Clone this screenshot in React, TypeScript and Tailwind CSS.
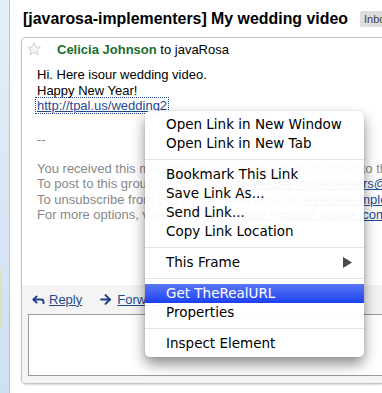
import { Reply, ArrowRight } from "lucide-react";

const menuFont = { fontFamily: '"DejaVu Sans", "Lucida Grande", sans-serif' };

export default function App() {
  return (
    <div className="relative h-[393px] w-[382px] overflow-hidden bg-white font-['Liberation_Sans',Arial,sans-serif]">
      <div className="flex h-full">
        {/* left strip */}
        <div className="relative w-[10px] shrink-0 border-r border-[#b9c5d2] bg-gradient-to-b from-[#e3eef9] to-[#cfe0f1]">
          <div className="absolute left-0 top-[270px] h-[58px] w-[2px] bg-[#d9e4b8]" />
        </div>

        <div className="flex min-w-0 flex-1 flex-col">
          {/* subject */}
          <div className="flex h-[37px] items-center gap-[12px] whitespace-nowrap pl-[13px] pt-[1px]">
            <h1 className="text-[15.9px] font-bold leading-none text-black">
              [javarosa-implementers] My wedding video
            </h1>
            <span className="rounded-l-[2px] bg-[#dddddd] px-[4px] py-[2px] text-[11px] leading-[12px] text-[#444]">
              Inbox
            </span>
          </div>

          {/* message card */}
          <div className="ml-[11px] flex h-[347px] flex-col overflow-hidden rounded-tl-[5px] rounded-bl-[5px] border border-r-0 border-[#c4c4c4] shadow-[0_1px_2px_rgba(0,0,0,0.15)]">
            <div className="flex h-[22px] items-center whitespace-nowrap">
              <svg width="16" height="16" viewBox="0 0 24 24" className="ml-[4px]">
                <path
                  d="M12 2.5l2.9 6.2 6.6.7-5 4.5 1.4 6.6L12 17.1l-5.9 3.4 1.4-6.6-5-4.5 6.6-.7z"
                  fill="#f4f4f4"
                  stroke="#c8c8c8"
                  strokeWidth="1.3"
                  strokeLinejoin="round"
                />
              </svg>
              <span className="ml-[15px] text-[13px] leading-none">
                <span className="font-bold text-[#1b6e2b]">Celicia Johnson</span>
                <span className="text-black"> to javaRosa</span>
              </span>
            </div>

            <div className="flex-1 whitespace-nowrap bg-white pl-[15px] pt-[7px] text-[13px] leading-[15.5px]">
              <p className="text-black">Hi. Here isour wedding video.</p>
              <p className="text-black">Happy New Year!</p>
              <a className="inline-block leading-[13px] text-[#1f4a92] underline outline-1 outline-dotted outline-offset-[1px] outline-[#1f4a92]">
                http://tpal.us/wedding2
              </a>
              <p className="mt-[18px] text-[#888]">--</p>
              <div className="mt-[14px] leading-[15.3px] text-[#888]">
                <p>
                  You received this message because you are subscribed to the Google Groups "javarosa-implementers" group.
                </p>
                <p>
                  To post to this group, send email to{" "}
                  <span className="text-[#1f4a92] underline">javarosa-implementers@googlegroups.com</span>.
                </p>
                <p>
                  To unsubscribe from this group, send email to{" "}
                  <span className="text-[#1f4a92] underline">javarosa-implementers+unsubscribe@googlegroups.com</span>.
                </p>
                <p>
                  For more options, visit this group at{" "}
                  <span className="text-[#1f4a92] underline">http://groups.google.com/group/javarosa-implementers?hl=en</span>.
                </p>
              </div>
            </div>

            {/* reply area */}
            <div className="flex h-[98px] flex-col bg-[#f4f4f4] pl-[6px]">
              <div className="flex h-[29px] items-center gap-[16px] whitespace-nowrap pl-[3px] text-[13px]">
                <span className="flex items-center gap-[3px]">
                  <Reply className="h-[15px] w-[15px] text-[#1b3f86]" strokeWidth={3} />
                  <span className="text-[#1f4a92] underline">Reply</span>
                </span>
                <span className="flex items-center gap-[4px]">
                  <ArrowRight className="h-[15px] w-[15px] text-[#1b3f86]" strokeWidth={3.2} />
                  <span className="text-[#1f4a92] underline">Forward</span>
                </span>
              </div>
              <div className="h-[62px] border border-r-0 border-[#9a9a9a] bg-white" />
            </div>
          </div>
        </div>
      </div>

      {/* context menu */}
      <div
        style={menuFont}
        className="absolute left-[145px] top-[111px] w-[219px] rounded-[5px] bg-white/[0.95] pb-[4px] pt-[4px] text-[13.5px] text-black shadow-[0_7px_14px_rgba(0,0,0,0.45),0_0_1px_rgba(0,0,0,0.4)]"
      >
        <MenuItem label="Open Link in New Window" />
        <MenuItem label="Open Link in New Tab" />
        <Separator />
        <MenuItem label="Bookmark This Link" />
        <MenuItem label="Save Link As..." />
        <MenuItem label="Send Link..." />
        <MenuItem label="Copy Link Location" />
        <Separator />
        <MenuItem label="This Frame" submenu />
        <Separator />
        <MenuItem label="Get TheRealURL" active />
        <MenuItem label="Properties" />
        <Separator />
        <MenuItem label="Inspect Element" />
      </div>
    </div>
  );
}

function MenuItem({ label, active, submenu }: { label: string; active?: boolean; submenu?: boolean }) {
  return (
    <div
      className={
        active
          ? "flex h-[19px] items-center justify-between bg-gradient-to-b from-[#5b74f6] to-[#1b3ff0] pl-[21px] pr-[12px] text-white"
          : "flex h-[19px] items-center justify-between pl-[21px] pr-[12px]"
      }
    >
      <span className="whitespace-nowrap leading-none">{label}</span>
      {submenu && (
        <svg width="9" height="11" viewBox="0 0 9 11">
          <path d="M0 0L9 5.5L0 11z" fill="#4a4a4a" />
        </svg>
      )}
    </div>
  );
}

function Separator() {
  return (
    <div className="flex h-[12px] items-center">
      <div className="h-px w-full bg-[#e2e2e2]" />
    </div>
  );
}
